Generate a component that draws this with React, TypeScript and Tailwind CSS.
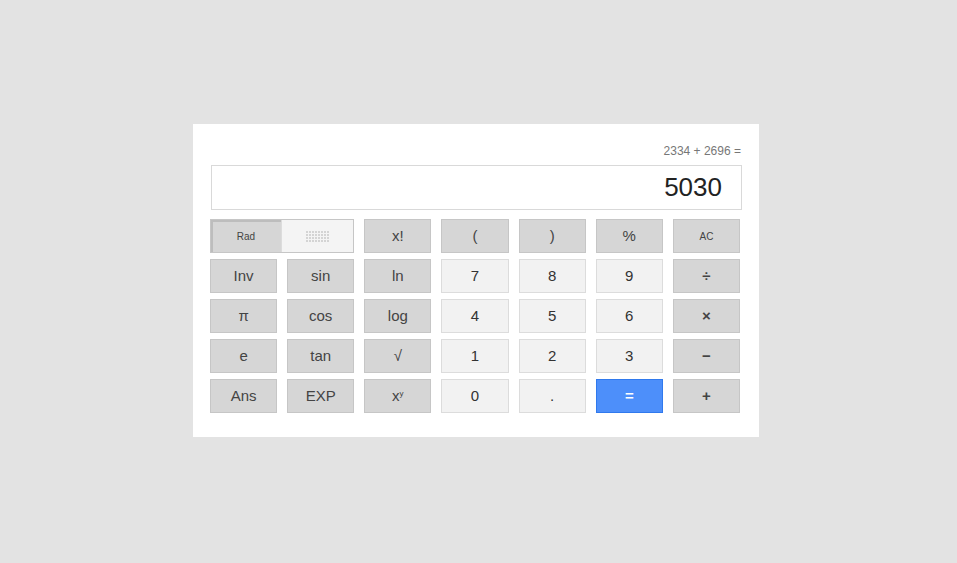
import React from 'react';

type Kind = 'dark' | 'light' | 'blue';

interface Key {
  label: React.ReactNode;
  kind: Kind;
  small?: boolean;
  bold?: boolean;
}

const keys: Key[] = [
  { label: 'x!', kind: 'dark' },
  { label: '(', kind: 'dark' },
  { label: ')', kind: 'dark' },
  { label: '%', kind: 'dark' },
  { label: 'AC', kind: 'dark', small: true },

  { label: 'Inv', kind: 'dark' },
  { label: 'sin', kind: 'dark' },
  { label: 'ln', kind: 'dark' },
  { label: '7', kind: 'light' },
  { label: '8', kind: 'light' },
  { label: '9', kind: 'light' },
  { label: '÷', kind: 'dark', bold: true },

  { label: 'π', kind: 'dark' },
  { label: 'cos', kind: 'dark' },
  { label: 'log', kind: 'dark' },
  { label: '4', kind: 'light' },
  { label: '5', kind: 'light' },
  { label: '6', kind: 'light' },
  { label: '×', kind: 'dark', bold: true },

  { label: 'e', kind: 'dark' },
  { label: 'tan', kind: 'dark' },
  { label: '√', kind: 'dark' },
  { label: '1', kind: 'light' },
  { label: '2', kind: 'light' },
  { label: '3', kind: 'light' },
  { label: '−', kind: 'dark', bold: true },

  { label: 'Ans', kind: 'dark' },
  { label: 'EXP', kind: 'dark' },
  { label: <span>x<sup className="text-[8px] -top-[5px]">y</sup></span>, kind: 'dark' },
  { label: '0', kind: 'light' },
  { label: '.', kind: 'light' },
  { label: '=', kind: 'blue', bold: true },
  { label: '+', kind: 'dark', bold: true },
];

const kindClass = (kind: Kind) => {
  switch (kind) {
    case 'dark': return 'bg-[#d6d6d6] border-[#c6c6c6] text-[#444]';
    case 'light': return 'bg-[#f2f2f2] border-[#dcdcdc] text-[#333]';
    case 'blue': return 'bg-[#4d8ffa] border-[#3079ed] text-white';
  }
};

const RadToggle: React.FC = () => (
  <div className="col-span-2 flex h-[34px] border border-[#c6c6c6]">
    <div className="w-[70px] flex items-center justify-center bg-[#d6d6d6] shadow-[inset_2px_2px_0_#bdbdbd] text-[10px] text-[#444]">
      Rad
    </div>
    <div className="flex-1 flex items-center justify-center bg-[#f4f4f4] border-l border-[#dcdcdc]">
      <div className="grid grid-cols-8 gap-[1px]">
        {Array.from({ length: 32 }).map((_, i) => (
          <span key={i} className="w-[2px] h-[2px] bg-[#d4d4d4]" />
        ))}
      </div>
    </div>
  </div>
);

export default function App() {
  return (
    <div className="min-h-screen bg-[#e3e3e3] pl-[193px] pt-[124px] font-['Liberation_Sans',Arial,sans-serif]">
      <div className="w-[566px] bg-white pl-[17px] pr-[17px] pt-[19px] pb-[24px]">
        <div className="h-[16px] text-right text-[12px] leading-[16px] text-[#777] pr-[1px]">
          2334 + 2696 =
        </div>
        <div className="mt-[6px] ml-[1px] h-[45px] border border-[#d9d9d9] flex items-center justify-end pr-[19px] text-[26px] text-[#222]">
          5030
        </div>
        <div className="mt-[9px] w-[530px] grid grid-cols-7 gap-x-[10px] gap-y-[6px]">
          <RadToggle />
          {keys.map((k, i) => (
            <button
              key={i}
              className={`h-[34px] border flex items-center justify-center ${kindClass(k.kind)} ${
                k.small ? 'text-[10px]' : 'text-[15px]'
              } ${k.bold ? 'font-bold' : ''}`}
            >
              {k.label}
            </button>
          ))}
        </div>
      </div>
    </div>
  );
}
